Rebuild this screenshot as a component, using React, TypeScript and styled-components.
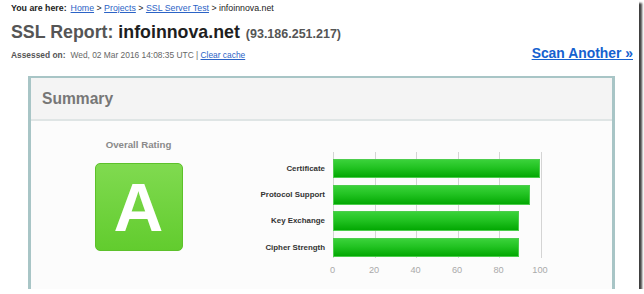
import styled, { createGlobalStyle } from 'styled-components';

const GlobalStyle = createGlobalStyle`
    html, body {
        margin: 0;
        padding: 0;
        background: #ffffff;
    }

    body {
        font-family: "Liberation Sans", Arial, sans-serif;
    }
`;

const scores = [
    { label: 'Certificate', value: 100 },
    { label: 'Protocol Support', value: 95 },
    { label: 'Key Exchange', value: 90 },
    { label: 'Cipher Strength', value: 90 },
];

const ticks = [0, 20, 40, 60, 80, 100];

const Frame = styled.div`
    width: 639px;
    height: 289px;
    overflow: hidden;
    background: #ffffff;
    box-shadow: 3px 3px 2px rgba(0, 0, 0, 0.75);
`;

const Header = styled.header`
    padding: 1.6px 6px 0 11px;
`;

const Breadcrumb = styled.div`
    font-size: 8.8px;
    line-height: 12px;
    color: #222;
`;

const Here = styled.b`
    margin-right: 4px;
    color: #222;
`;

const Crumb = styled.a`
    color: #2b63c6;
    text-decoration: underline;
`;

const Title = styled.h1`
    margin: 7.4px 0 0;
    font-size: 17.8px;
    line-height: 22px;
    font-weight: bold;
    color: #555;
`;

const Host = styled.span`
    color: #1e1e1e;
`;

const Ip = styled.span`
    margin-left: 1px;
    font-size: 12.5px;
    color: #555;
`;

const MetaRow = styled.div`
    display: flex;
    justify-content: space-between;
    align-items: baseline;
    margin-top: 1.5px;
`;

const Assessed = styled.div`
    font-size: 8.4px;
    line-height: 12px;
    color: #666;

    b {
        margin-right: 5px;
        color: #555;
    }
`;

const ScanLink = styled.a`
    font-size: 13.9px;
    line-height: 15px;
    font-weight: bold;
    color: #1561cf;
    text-decoration: underline;
`;

const Summary = styled.section`
    box-sizing: border-box;
    width: 587px;
    margin: 15px 0 0 28px;
    border: 3px solid #a8c5c6;
    border-top-width: 2.5px;
    background: #fcfcfc;
`;

const SummaryHead = styled.div`
    display: flex;
    align-items: center;
    height: 41px;
    padding-left: 11px;
    border-bottom: 2px solid #dfe5e5;
    background: #f4f4f4;
    font-size: 15.6px;
    font-weight: bold;
    color: #777;
`;

const SummaryBody = styled.div`
    display: flex;
    min-height: 200px;
`;

const RatingCol = styled.div`
    display: flex;
    flex-direction: column;
    align-items: center;
    width: 215px;
    padding-top: 17.6px;
`;

const RatingTitle = styled.div`
    font-size: 9.7px;
    line-height: 12px;
    font-weight: bold;
    color: #8a8a8a;
`;

const Grade = styled.div`
    box-sizing: border-box;
    display: flex;
    align-items: center;
    justify-content: center;
    width: 88px;
    height: 88px;
    margin-top: 12.4px;
    border: 1px solid #5dc12b;
    border-radius: 5px;
    background: linear-gradient(to bottom, #80da50, #62cc2e);
    font-size: 69px;
    line-height: 1;
    font-weight: bold;
    color: #ffffff;
`;

const ChartCol = styled.div`
    padding-top: 31px;
`;

const ChartRow = styled.div`
    display: flex;
    gap: 7.5px;
`;

const Labels = styled.div`
    display: flex;
    flex-direction: column;
    gap: 6.8px;
    width: 79px;
    padding-top: 6.3px;
`;

const Label = styled.div`
    height: 19.5px;
    font-size: 7.9px;
    line-height: 19.5px;
    font-weight: bold;
    text-align: right;
    color: #333;
    white-space: nowrap;
`;

const Plot = styled.div`
    display: flex;
    flex-direction: column;
    gap: 6.8px;
    width: 207.5px;
    padding: 6.3px 1.5px 1.3px 0;
    background-image: repeating-linear-gradient(
        to right,
        #d4d4d4 0,
        #d4d4d4 1px,
        transparent 1px,
        transparent 41.5px
    );
`;

const Bar = styled.div`
    box-sizing: border-box;
    height: 19.5px;
    border: 1px solid #4ccd4c;
    background: linear-gradient(to bottom, #3ad23a 0%, #22c322 45%, #03a803 100%);
`;

const Axis = styled.div`
    display: flex;
    margin: 5.4px 0 0 65.75px;
`;

const Tick = styled.span`
    width: 41.5px;
    font-size: 9.2px;
    line-height: 12px;
    text-align: center;
    color: #aaa;
`;

export default function App() {
    return (
        <>
            <GlobalStyle />
            <Frame>
                <Header>
                    <Breadcrumb>
                        <Here>You are here:</Here>
                        <Crumb href="#">Home</Crumb> &gt; <Crumb href="#">Projects</Crumb> &gt;{' '}
                        <Crumb href="#">SSL Server Test</Crumb> &gt; infoinnova.net
                    </Breadcrumb>

                    <Title>
                        SSL Report: <Host>infoinnova.net</Host> <Ip>(93.186.251.217)</Ip>
                    </Title>

                    <MetaRow>
                        <Assessed>
                            <b>Assessed on:</b>
                            Wed, 02 Mar 2016 14:08:35 UTC | <Crumb href="#">Clear cache</Crumb>
                        </Assessed>
                        <ScanLink href="#">Scan Another »</ScanLink>
                    </MetaRow>
                </Header>

                <Summary>
                    <SummaryHead>Summary</SummaryHead>
                    <SummaryBody>
                        <RatingCol>
                            <RatingTitle>Overall Rating</RatingTitle>
                            <Grade>A</Grade>
                        </RatingCol>

                        <ChartCol>
                            <ChartRow>
                                <Labels>
                                    {scores.map((s) => (
                                        <Label key={s.label}>{s.label}</Label>
                                    ))}
                                </Labels>
                                <Plot>
                                    {scores.map((s) => (
                                        <Bar key={s.label} style={{ width: `${s.value}%` }} />
                                    ))}
                                </Plot>
                            </ChartRow>
                            <Axis>
                                {ticks.map((t) => (
                                    <Tick key={t}>{t}</Tick>
                                ))}
                            </Axis>
                        </ChartCol>
                    </SummaryBody>
                </Summary>
            </Frame>
        </>
    );
}
